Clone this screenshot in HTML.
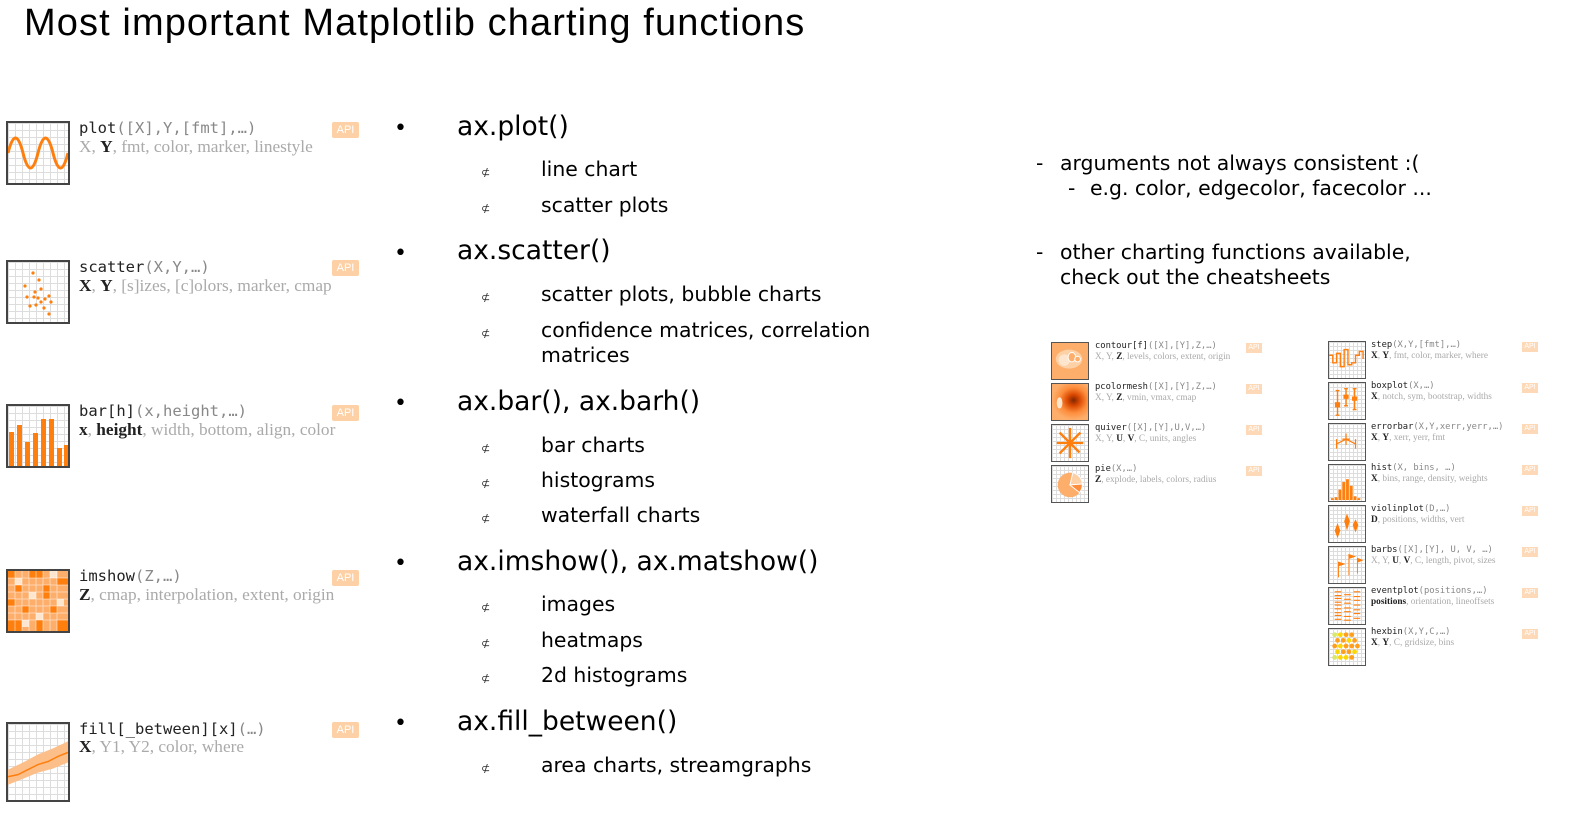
<!DOCTYPE html>
<html><head><meta charset="utf-8"><style>
*{margin:0;padding:0;box-sizing:border-box}
body{width:1590px;height:819px;background:#fff;position:relative;overflow:hidden;font-family:"DejaVu Sans","Liberation Sans",sans-serif;color:#000}
.a{position:absolute;white-space:nowrap}
.t{font-family:"Liberation Sans",sans-serif;font-size:38px;letter-spacing:1.1px;left:24px;top:2px}
.h{font-size:26.5px;left:457px;line-height:32px}
.b{font-size:22px;left:394px}
.s{font-size:20.4px;left:541px;line-height:26px}
.c{font-size:11px;left:481px;color:#333}
.r{font-size:20.4px;line-height:25px}
.ic{position:absolute;border:2px solid #444;background-color:#fff;background-image:linear-gradient(#ddd 1px,transparent 1px),linear-gradient(90deg,#ddd 1px,transparent 1px);background-size:7px 7px;overflow:hidden}
.ic svg{position:absolute;left:0;top:0;width:100%;height:100%}
.fn{font-family:"DejaVu Sans Mono","Liberation Mono",monospace;font-size:15.5px;color:#222}
.fn i{font-style:normal;color:#888}
.ar{font-family:"Liberation Serif",serif;font-size:17.3px;color:#aaa}
.ar b{color:#222}
.api{position:absolute;background:#fdd0a6;color:#fff;font-family:"Liberation Sans",sans-serif;font-size:11px;width:27px;height:16px;text-align:center;line-height:16px;border-radius:2px}
.sfn{font-family:"DejaVu Sans Mono",monospace;font-size:8.8px;color:#222}
.sfn i{font-style:normal;color:#888}
.sar{font-family:"Liberation Serif",serif;font-size:9.3px;color:#aaa}
.sar b{color:#222}
.sapi{position:absolute;background:#fdd9b8;color:#fff;font-family:"Liberation Sans",sans-serif;font-size:7px;width:16px;height:10px;text-align:center;line-height:10px}
.sic{position:absolute;width:38px;height:38px;border:1.5px solid #555;background-color:#fff;background-image:linear-gradient(#ddd 1px,transparent 1px),linear-gradient(90deg,#ddd 1px,transparent 1px);background-size:4px 4px;overflow:hidden}
.sic svg{position:absolute;left:0;top:0;width:100%;height:100%}
</style></head><body>
<div class="a t">Most important Matplotlib charting functions</div>

<div class="ic" style="left:6px;top:121px;width:64px;height:64px"><svg viewBox="0 0 60 60"><path d="M0 30 C5 10 10 10 15 30 S25 50 30 30 S40 10 45 30 S55 50 60 30" fill="none" stroke="#ff7f0e" stroke-width="3"/></svg></div>
<div class="a fn" style="left:79px;top:119px">plot<i>([X],Y,[fmt],…)</i></div>
<div class="a ar" style="left:79px;top:137px">X, <b>Y</b>, fmt, color, marker, linestyle</div>
<div class="api" style="left:332px;top:122px">API</div>

<div class="ic" style="left:6px;top:260px;width:64px;height:64px"><svg viewBox="0 0 60 60" fill="#ff7f0e"><circle cx="25" cy="11" r="1.6"/><circle cx="31" cy="18" r="1.6"/><circle cx="17" cy="24" r="1.6"/><circle cx="27" cy="30" r="1.6"/><circle cx="33" cy="27" r="1.6"/><circle cx="19" cy="35" r="1.6"/><circle cx="26" cy="35" r="1.6"/><circle cx="30" cy="36" r="1.6"/><circle cx="37" cy="37" r="1.6"/><circle cx="41" cy="34" r="1.6"/><circle cx="43" cy="40" r="1.6"/><circle cx="33" cy="40" r="1.6"/><circle cx="22" cy="44" r="1.6"/><circle cx="28" cy="43" r="1.6"/><circle cx="41" cy="52" r="1.6"/><circle cx="36" cy="46" r="1.6"/></svg></div>
<div class="a fn" style="left:79px;top:258px">scatter<i>(X,Y,…)</i></div>
<div class="a ar" style="left:79px;top:276px"><b>X</b>, <b>Y</b>, [s]izes, [c]olors, marker, cmap</div>
<div class="api" style="left:332px;top:260px">API</div>

<div class="ic" style="left:6px;top:404px;width:64px;height:64px"><svg viewBox="0 0 60 60" fill="#ff7f0e"><rect x="1" y="26" width="5" height="34"/><rect x="9" y="19" width="5" height="41"/><rect x="17" y="36" width="5" height="24"/><rect x="25" y="27" width="5" height="33"/><rect x="33" y="13" width="5" height="47"/><rect x="41" y="13" width="5" height="47"/><rect x="49" y="42" width="5" height="18"/><rect x="56" y="39" width="4" height="21"/></svg></div>
<div class="a fn" style="left:79px;top:402px">bar[h]<i>(x,height,…)</i></div>
<div class="a ar" style="left:79px;top:420px"><b>x</b>, <b>height</b>, width, bottom, align, color</div>
<div class="api" style="left:332px;top:405px">API</div>

<div class="ic" style="left:6px;top:569px;width:64px;height:64px;background:#fdae6b"><svg viewBox="0 0 60 60"><g fill="#ff7f0e"><rect x="0" y="0" width="7" height="7"/><rect x="21" y="0" width="14" height="7"/><rect x="7" y="14" width="7" height="7"/><rect x="35" y="14" width="7" height="14"/><rect x="49" y="7" width="11" height="7"/><rect x="0" y="28" width="7" height="7"/><rect x="14" y="35" width="7" height="7"/><rect x="42" y="35" width="7" height="7"/><rect x="28" y="49" width="7" height="11"/><rect x="0" y="49" width="14" height="11"/><rect x="49" y="49" width="11" height="11"/></g><g fill="#fee6ce"><rect x="7" y="7" width="7" height="7"/><rect x="21" y="21" width="7" height="7"/><rect x="49" y="28" width="7" height="7"/><rect x="28" y="42" width="7" height="7"/><rect x="14" y="49" width="7" height="7"/><rect x="42" y="0" width="7" height="7"/></g><path d="M7 0V60M14 0V60M21 0V60M28 0V60M35 0V60M42 0V60M49 0V60M0 7H60M0 14H60M0 21H60M0 28H60M0 35H60M0 42H60M0 49H60" stroke="#fff" stroke-width=".8" opacity=".6"/></svg></div>
<div class="a fn" style="left:79px;top:567px">imshow<i>(Z,…)</i></div>
<div class="a ar" style="left:79px;top:585px"><b>Z</b>, cmap, interpolation, extent, origin</div>
<div class="api" style="left:332px;top:570px">API</div>

<div class="ic" style="left:6px;top:722px;width:64px;height:80px"><svg viewBox="0 0 60 75" preserveAspectRatio="none"><path d="M0 45 L15 38 L30 30 L45 24 L60 17 L60 38 L45 44 L30 48 L15 54 L0 60Z" fill="#fdbf8a"/><path d="M0 52 L10 50 L20 45 L30 40 L40 37 L50 32 L60 28" fill="none" stroke="#ff7f0e" stroke-width="1.5"/></svg></div>
<div class="a fn" style="left:79px;top:720px">fill[_between][x]<i>(…)</i></div>
<div class="a ar" style="left:79px;top:737px"><b>X</b>, Y1, Y2, color, where</div>
<div class="api" style="left:332px;top:722px">API</div>

<div class="a b" style="top:116px">•</div><div class="a h" style="top:111px">ax.plot()</div>
<div class="a c" style="top:166px">⊄</div><div class="a s" style="top:156px">line chart</div>
<div class="a c" style="top:202px">⊄</div><div class="a s" style="top:192px">scatter plots</div>
<div class="a b" style="top:241px">•</div><div class="a h" style="top:235px">ax.scatter()</div>
<div class="a c" style="top:291px">⊄</div><div class="a s" style="top:281px">scatter plots, bubble charts</div>
<div class="a c" style="top:327px">⊄</div><div class="a s" style="top:317px">confidence matrices, correlation</div>
<div class="a s" style="top:342px">matrices</div>
<div class="a b" style="top:391px">•</div><div class="a h" style="top:386px">ax.bar(), ax.barh()</div>
<div class="a c" style="top:442px">⊄</div><div class="a s" style="top:432px">bar charts</div>
<div class="a c" style="top:477px">⊄</div><div class="a s" style="top:467px">histograms</div>
<div class="a c" style="top:512px">⊄</div><div class="a s" style="top:502px">waterfall charts</div>
<div class="a b" style="top:551px">•</div><div class="a h" style="top:546px">ax.imshow(), ax.matshow()</div>
<div class="a c" style="top:601px">⊄</div><div class="a s" style="top:591px">images</div>
<div class="a c" style="top:637px">⊄</div><div class="a s" style="top:627px">heatmaps</div>
<div class="a c" style="top:672px">⊄</div><div class="a s" style="top:662px">2d histograms</div>
<div class="a b" style="top:711px">•</div><div class="a h" style="top:706px">ax.fill_between()</div>
<div class="a c" style="top:762px">⊄</div><div class="a s" style="top:752px">area charts, streamgraphs</div>

<div class="a r" style="left:1036px;top:151px">-</div><div class="a r" style="left:1060px;top:151px">arguments not always consistent :(</div>
<div class="a r" style="left:1068px;top:176px">-</div><div class="a r" style="left:1090px;top:176px">e.g. color, edgecolor, facecolor ...</div>
<div class="a r" style="left:1036px;top:240px">-</div><div class="a r" style="left:1060px;top:240px">other charting functions available,</div>
<div class="a r" style="left:1060px;top:265px">check out the cheatsheets</div>

<div class="sic" style="left:1051px;top:342px;background:#fdae6b"><svg viewBox="0 0 38 38"><ellipse cx="18" cy="17" rx="14" ry="10" fill="#fdd0a6"/><ellipse cx="13" cy="18" rx="6" ry="6" fill="#fee6ce"/><ellipse cx="21" cy="15" rx="4" ry="5" fill="#fdae6b" stroke="#fff"/><circle cx="27" cy="17" r="3" fill="#fdae6b" stroke="#fff"/></svg></div>
<div class="a sfn" style="left:1095px;top:341px">contour[f]<i>([X],[Y],Z,…)</i></div>
<div class="a sar" style="left:1095px;top:352px">X, Y, <b>Z</b>, levels, colors, extent, origin</div>
<div class="sapi" style="left:1246px;top:343px">API</div>

<div class="sic" style="left:1051px;top:383px;background:radial-gradient(ellipse at 60% 45%,#7f2704 0,#d94801 20%,#fd8d3c 45%,#fdae6b 70%)"><svg viewBox="0 0 38 38"><ellipse cx="8" cy="20" rx="3" ry="6" fill="#fee6ce"/></svg></div>
<div class="a sfn" style="left:1095px;top:382px">pcolormesh<i>([X],[Y],Z,…)</i></div>
<div class="a sar" style="left:1095px;top:393px">X, Y, <b>Z</b>, vmin, vmax, cmap</div>
<div class="sapi" style="left:1246px;top:384px">API</div>

<div class="sic" style="left:1051px;top:424px"><svg viewBox="0 0 38 38" stroke="#ff7f0e" stroke-width="2.5"><path d="M19 19L19 3M19 19L33 19M19 19L19 35M19 19L5 19M19 19L30 8M19 19L8 30M19 19L29 29M19 19L8 8"/></svg></div>
<div class="a sfn" style="left:1095px;top:423px">quiver<i>([X],[Y],U,V,…)</i></div>
<div class="a sar" style="left:1095px;top:434px">X, Y, <b>U</b>, <b>V</b>, C, units, angles</div>
<div class="sapi" style="left:1246px;top:425px">API</div>

<div class="sic" style="left:1051px;top:465px"><svg viewBox="0 0 38 38"><circle cx="19" cy="20" r="13" fill="#fdae6b"/><path d="M19 20L22 7A13 13 0 0 1 32 19Z" fill="#fdd0a6" stroke="#fff"/><path d="M19 20L32 19A13 13 0 0 1 29 28Z" fill="#fd8d3c" stroke="#fff"/></svg></div>
<div class="a sfn" style="left:1095px;top:464px">pie<i>(X,…)</i></div>
<div class="a sar" style="left:1095px;top:475px"><b>Z</b>, explode, labels, colors, radius</div>
<div class="sapi" style="left:1246px;top:466px">API</div>

<div class="sic" style="left:1328px;top:341px"><svg viewBox="0 0 38 38"><path d="M0 14H4V22H8V12H12V26H16V8H20V24H24V22H28V14H32V10H36V18" fill="none" stroke="#ff7f0e" stroke-width="1.5"/></svg></div>
<div class="a sfn" style="left:1371px;top:340px">step<i>(X,Y,[fmt],…)</i></div>
<div class="a sar" style="left:1371px;top:351px"><b>X</b>, <b>Y</b>, fmt, color, marker, where</div>
<div class="sapi" style="left:1522px;top:342px">API</div>

<div class="sic" style="left:1328px;top:382px"><svg viewBox="0 0 38 38" stroke="#ff7f0e" stroke-width="1.5" fill="#ff7f0e"><path d="M9 8V34M18 6V24M27 6V28M7 8H11M7 34H11M16 6H20M16 24H20M25 6H29M25 28H29" fill="none"/><rect x="7" y="21" width="4" height="4"/><rect x="16" y="13" width="4" height="3"/><rect x="25" y="15" width="4" height="3"/></svg></div>
<div class="a sfn" style="left:1371px;top:381px">boxplot<i>(X,…)</i></div>
<div class="a sar" style="left:1371px;top:392px"><b>X</b>, notch, sym, bootstrap, widths</div>
<div class="sapi" style="left:1522px;top:383px">API</div>

<div class="sic" style="left:1328px;top:423px"><svg viewBox="0 0 38 38" stroke="#ff7f0e" stroke-width="1.3" fill="none"><path d="M8 21L18 16L28 21M8 16V26M18 10V22M28 16V26M14 16H22"/></svg></div>
<div class="a sfn" style="left:1371px;top:422px">errorbar<i>(X,Y,xerr,yerr,…)</i></div>
<div class="a sar" style="left:1371px;top:433px"><b>X</b>, <b>Y</b>, xerr, yerr, fmt</div>
<div class="sapi" style="left:1522px;top:424px">API</div>

<div class="sic" style="left:1328px;top:464px"><svg viewBox="0 0 38 38" fill="#ff7f0e"><rect x="2" y="35" width="3" height="2"/><rect x="6" y="34" width="3" height="3"/><rect x="10" y="26" width="3" height="11"/><rect x="14" y="18" width="3" height="19"/><rect x="18" y="15" width="3" height="22"/><rect x="22" y="22" width="3" height="15"/><rect x="26" y="33" width="3" height="4"/><rect x="30" y="35" width="3" height="2"/></svg></div>
<div class="a sfn" style="left:1371px;top:463px">hist<i>(X, bins, …)</i></div>
<div class="a sar" style="left:1371px;top:474px"><b>X</b>, bins, range, density, weights</div>
<div class="sapi" style="left:1522px;top:465px">API</div>

<div class="sic" style="left:1328px;top:505px"><svg viewBox="0 0 38 38" fill="#ff7f0e"><path d="M9 18L12 26L9 34L6 26Z"/><path d="M19 8L22 16L19 26L16 16Z"/><path d="M28 14L31 20L28 28L25 20Z"/></svg></div>
<div class="a sfn" style="left:1371px;top:504px">violinplot<i>(D,…)</i></div>
<div class="a sar" style="left:1371px;top:515px"><b>D</b>, positions, widths, vert</div>
<div class="sapi" style="left:1522px;top:506px">API</div>

<div class="sic" style="left:1328px;top:546px"><svg viewBox="0 0 38 38" stroke="#ff7f0e" fill="#ff7f0e" stroke-width="1"><path d="M10 32V16L16 18L10 20M21 30V8L27 10L21 12M30 28V12L35 14L30 16"/></svg></div>
<div class="a sfn" style="left:1371px;top:545px">barbs<i>([X],[Y], U, V, …)</i></div>
<div class="a sar" style="left:1371px;top:556px">X, Y, <b>U</b>, <b>V</b>, C, length, pivot, sizes</div>
<div class="sapi" style="left:1522px;top:547px">API</div>

<div class="sic" style="left:1328px;top:587px"><svg viewBox="0 0 38 38" stroke="#ff7f0e" stroke-width="1.2"><path d="M6 4H13M6 8H13M6 11H13M6 15H13M6 18H13M6 22H13M6 26H13M6 29H13M6 33H13M16 7H23M16 12H23M16 16H23M16 21H23M16 25H23M16 30H23M16 34H23M26 4H33M26 9H33M26 13H33M26 18H33M26 23H33M26 27H33M26 32H33"/></svg></div>
<div class="a sfn" style="left:1371px;top:586px">eventplot<i>(positions,…)</i></div>
<div class="a sar" style="left:1371px;top:597px"><b>positions</b>, orientation, lineoffsets</div>
<div class="sapi" style="left:1522px;top:588px">API</div>

<div class="sic" style="left:1328px;top:628px"><svg viewBox="0 0 38 38"><g fill="#ff9f1c"><circle cx="6" cy="6" r="2.5" fill="#d9e86a"/><circle cx="12" cy="6" r="2.5" fill="#ffd700"/><circle cx="18" cy="6" r="2.5"/><circle cx="24" cy="6" r="2.5"/><circle cx="9" cy="12" r="2.5"/><circle cx="15" cy="12" r="2.5"/><circle cx="21" cy="12" r="2.5" fill="#ffd700"/><circle cx="27" cy="12" r="2.5"/><circle cx="6" cy="18" r="2.5"/><circle cx="12" cy="18" r="2.5" fill="#ffd700"/><circle cx="18" cy="18" r="2.5"/><circle cx="24" cy="18" r="2.5"/><circle cx="30" cy="18" r="2.5"/><circle cx="9" cy="24" r="2.5" fill="#ffd700"/><circle cx="15" cy="24" r="2.5"/><circle cx="21" cy="24" r="2.5"/><circle cx="27" cy="24" r="2.5" fill="#ffd700"/><circle cx="6" cy="30" r="2.5" fill="#d9e86a"/><circle cx="12" cy="30" r="2.5" fill="#ffd700"/><circle cx="18" cy="30" r="2.5" fill="#ffd700"/><circle cx="24" cy="30" r="2.5"/></g></svg></div>
<div class="a sfn" style="left:1371px;top:627px">hexbin<i>(X,Y,C,…)</i></div>
<div class="a sar" style="left:1371px;top:638px"><b>X</b>, <b>Y</b>, C, gridsize, bins</div>
<div class="sapi" style="left:1522px;top:629px">API</div>
</body></html>
